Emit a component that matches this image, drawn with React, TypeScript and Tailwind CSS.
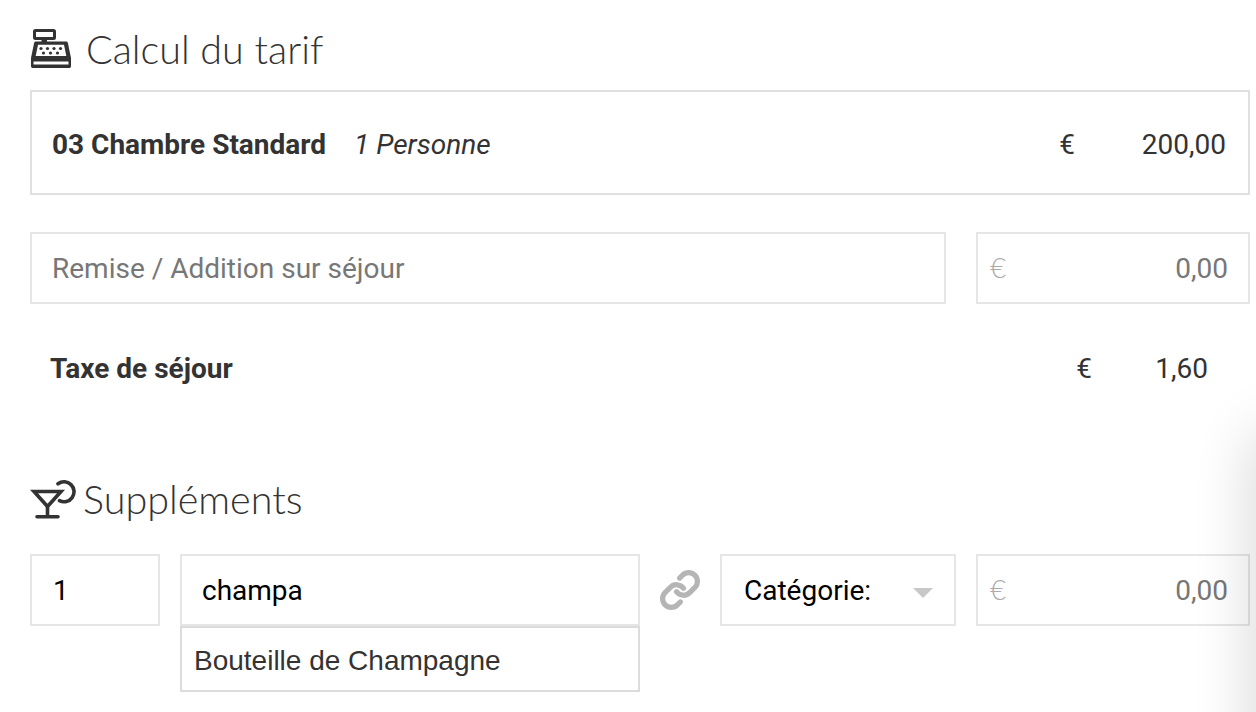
import { Link } from 'lucide-react'

const boxClass = 'h-full border-2 border-[#e6e6e6] bg-transparent outline-none'

function RegisterIcon() {
  return (
    <svg width="42" height="42" viewBox="0 0 42 42" className="shrink-0">
      <rect x="4.500" y="2.500" width="20" height="8" rx="1" fill="none" stroke="#333" strokeWidth="3" />
      <rect x="11.500" y="9" width="5.500" height="6" fill="#333" />
      <path d="M6 13.500h30c1 0 1.600.5 1.900 1.400L41 30v8c0 1.500-.8 2-2 2H3c-1.200 0-2-.5-2-2v-8l3.100-15.100c.3-.9 1-1.400 1.900-1.400z" fill="#333" />
      <path d="M8 16.800h26l2.300 11.200H5.700z" fill="#fff" />
      <rect x="3.500" y="33.500" width="35" height="3" fill="#fff" />
      {[
        [11, 20.500], [17.500, 20.500], [24, 20.500], [30.500, 20.500],
        [13.500, 25], [20.500, 25], [27.500, 25],
      ].map(([cx, cy]) => (
        <circle key={`${cx}-${cy}`} cx={cx} cy={cy} r="1.600" fill="#333" />
      ))}
    </svg>
  )
}

function CocktailIcon() {
  return (
    <svg width="46" height="42" viewBox="0 0 46 42" className="shrink-0 -mt-[3px]">
      <path d="M4 13.500h27L17.500 28.500z" fill="none" stroke="#333" strokeWidth="3.600" strokeLinejoin="miter" />
      <path d="M15.700 28h3.600v11h-3.600z" fill="#333" />
      <path d="M7 38.800h21" stroke="#333" strokeWidth="3.600" strokeLinecap="round" />
      <path d="M28 5.800A10 10 0 1 1 29.500 22.700" fill="none" stroke="#333" strokeWidth="3.600" strokeLinecap="round" />
    </svg>
  )
}

function AmountInput() {
  return (
    <div className={`${boxClass} w-[274px] shrink-0 flex items-center justify-between pl-[12px] pr-[20px] pt-[1px] text-[28px] text-[#777]`}>
      <span className="font-['Lato'] font-light text-[#aaa] text-[28px] -mt-[3px]">€</span>
      <span>0,00</span>
    </div>
  )
}

export default function App() {
  return (
    <div className="relative w-[1256px] h-[712px] overflow-hidden bg-white pl-[30px] pr-[6px] font-['Roboto',sans-serif] text-[#333]">
      {/* Calcul du tarif */}
      <div className="h-[90px] pt-[8px] flex items-center gap-[14px]">
        <RegisterIcon />
        <h2 className="font-['Lato',sans-serif] font-light text-[39.5px] leading-none text-[#333]">Calcul du tarif</h2>
      </div>

      <div className="h-[105px] border-2 border-[#e0e0e0] pl-[20px] pr-[22px] pt-[5px] flex items-center text-[28px]">
        <span className="font-bold">03 Chambre Standard</span>
        <span className="ml-[28px] italic">1 Personne</span>
        <span className="ml-auto">€</span>
        <span className="w-[151px] text-right">200,00</span>
      </div>

      <div className="mt-[37px] h-[72px] flex gap-[30px]">
        <input
          readOnly
          placeholder="Remise / Addition sur séjour"
          className={`${boxClass} w-[916px] px-[20px] pt-[1px] text-[28px] placeholder:text-[#777]`}
        />
        <AmountInput />
      </div>

      <div className="mt-[32px] h-[64px] pl-[20px] pr-[42px] pt-[1px] flex items-center text-[28px]">
        <span className="font-bold">Taxe de séjour</span>
        <span className="ml-auto">€</span>
        <span className="w-[116px] text-right">1,60</span>
      </div>

      {/* Suppléments */}
      <div className="mt-[50px] h-[100px] flex items-center gap-[7px]">
        <CocktailIcon />
        <h2 className="font-['Lato',sans-serif] font-light text-[39.5px] leading-none text-[#333] -mt-[2px]">Suppléments</h2>
      </div>

      <div className="mt-[4px] h-[72px] flex items-center text-[28px] text-black">
        <input readOnly value="1" className={`${boxClass} w-[130px] shrink-0 px-[21px] pt-[1px]`} />
        <div className="relative ml-[20px] w-[460px] h-full shrink-0">
          <input readOnly value="champa" className={`${boxClass} w-full px-[20px] pt-[1px]`} />
          <div className="absolute left-0 top-full w-full h-[66px] border-2 border-[#dcdcdc] bg-white pl-[12px] pt-[4px] flex items-center font-['Liberation_Sans',sans-serif] text-[28px] text-[#333]">
            Bouteille de Champagne
          </div>
        </div>
        <div className="w-[80px] shrink-0 flex justify-center">
          <Link size={42} strokeWidth={3} color="#b5b5b5" />
        </div>
        <div className={`${boxClass} w-[236px] shrink-0 mr-[20px] flex items-center justify-between pl-[22px] pr-[21px] pt-[1px]`}>
          <span>Catégorie:</span>
          <span className="w-0 h-0 border-x-[10px] border-x-transparent border-t-[10px] border-t-[#c8c8c8] mt-[4px]" />
        </div>
        <AmountInput />
      </div>

      {/* shadow from the panel just off the right edge */}
      <div className="absolute top-[430px] -right-[40px] w-[40px] h-[420px] rounded-full shadow-[0_0_60px_rgba(0,0,0,0.2)] pointer-events-none" />
    </div>
  )
}
